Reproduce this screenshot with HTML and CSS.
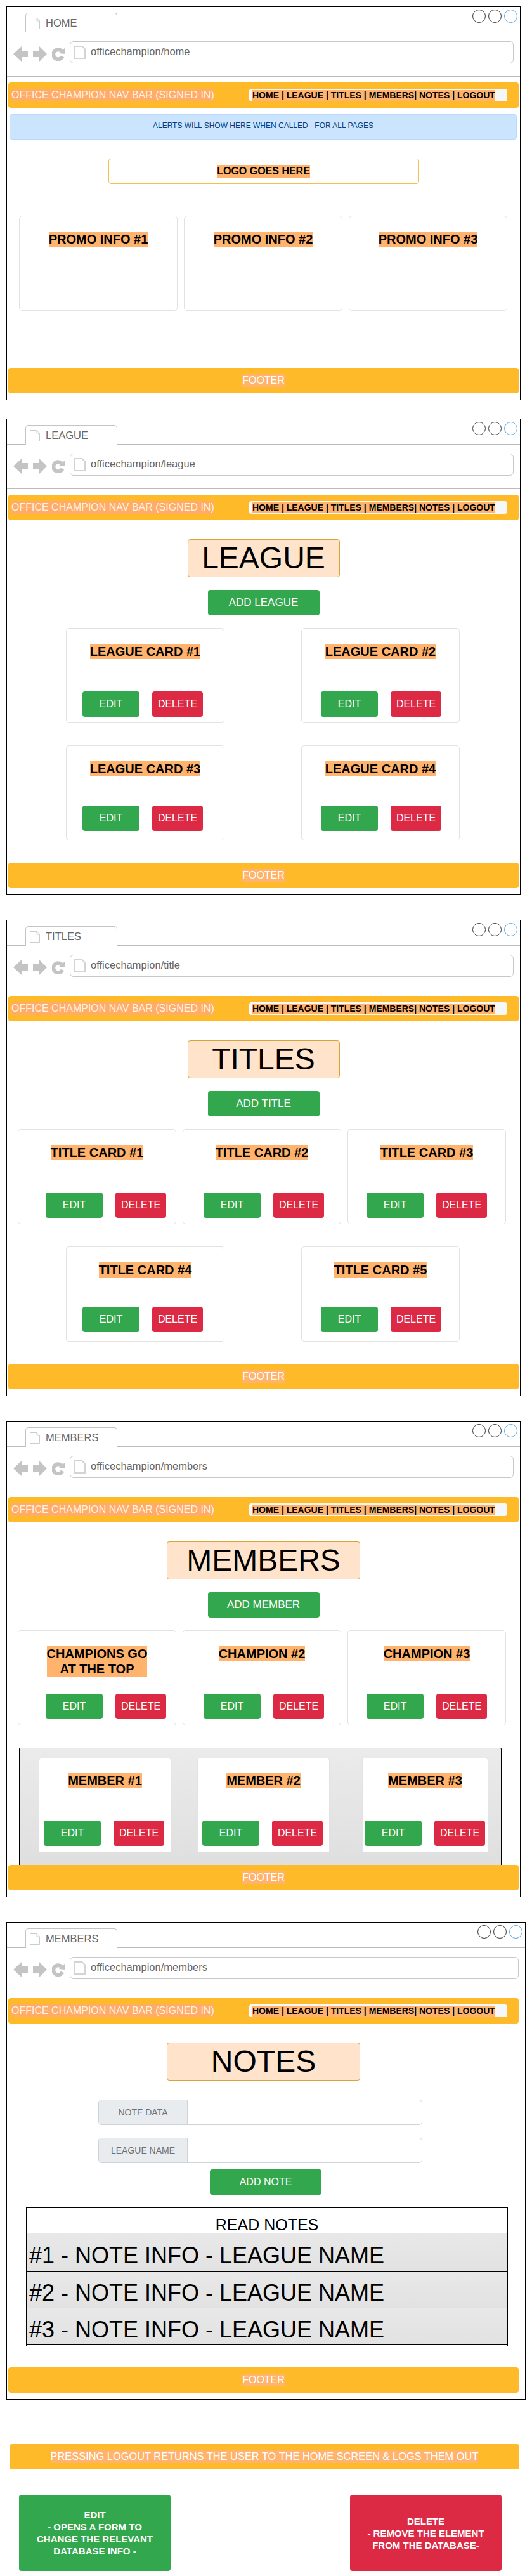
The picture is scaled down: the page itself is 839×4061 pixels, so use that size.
FILE: index.html
```html
<!DOCTYPE html>
<html lang="en">
<head>
<meta charset="utf-8">
<title>Office Champion wireframes</title>
<link rel="stylesheet" href="styles.css">
</head>
<body>
<svg class="sprite" xmlns="http://www.w3.org/2000/svg">
  <symbol id="i-tabfile" viewBox="0 0 16 18"><path d="M.5.5H11L15.5 5V17.5H.5Z M11 .5V5H15.5" fill="#fff" stroke="#ccc"/></symbol>
  <symbol id="i-urlfile" viewBox="0 0 18 21"><path d="M1 1H12.5L17 5.5V20H1Z" fill="#fff" stroke="#d4d4d4" stroke-width="2"/></symbol>
  <symbol id="i-back" viewBox="0 0 23 24"><path d="M0 12 13 0V7H23V17H13V24Z" fill="#c4c4c4"/></symbol>
  <symbol id="i-fwd" viewBox="0 0 22 24"><path d="M22 12 10 0V7H0V17H10V24Z" fill="#c4c4c4"/></symbol>
  <symbol id="i-reload" viewBox="0 0 21 22"><path d="M15 6.500A7.500 7.500 0 1 0 16.500 15" fill="none" stroke="#c4c4c4" stroke-width="6"/><path d="M11 10 21 1V11Z" fill="#c4c4c4"/></symbol>
</svg>

<section class="frame">
  <div class="strip"><div class="tab"><svg class="tab-icon"><use href="#i-tabfile"/></svg><span>HOME</span></div><div class="controls"><i class="dot"></i><i class="dot"></i><i class="dot dot-blue"></i></div></div>
  <div class="toolbar"><svg class="ico-back"><use href="#i-back"/></svg><svg class="ico-fwd"><use href="#i-fwd"/></svg><svg class="ico-reload"><use href="#i-reload"/></svg><div class="address"><svg class="url-icon"><use href="#i-urlfile"/></svg><span>officechampion/home</span></div></div>
  <div class="content">
    <nav class="nav"><span class="mark nav-title">OFFICE CHAMPION NAV BAR (SIGNED IN)</span><div class="nav-links"><span class="mark">HOME | LEAGUE | TITLES | MEMBERS| NOTES | LOGOUT</span></div></nav>
    <div class="alert">ALERTS WILL SHOW HERE WHEN CALLED - FOR ALL PAGES</div>
    <div class="logo"><span class="mark">LOGO GOES HERE</span></div>
    <div class="row row-three promo-row">
      <div class="card"><span class="mark card-title">PROMO INFO #1</span></div>
      <div class="card"><span class="mark card-title">PROMO INFO #2</span></div>
      <div class="card"><span class="mark card-title">PROMO INFO #3</span></div>
    </div>
    <footer class="footer footer-home"><span class="mark">FOOTER</span></footer>
  </div>
</section>

<section class="frame">
  <div class="strip"><div class="tab"><svg class="tab-icon"><use href="#i-tabfile"/></svg><span>LEAGUE</span></div><div class="controls"><i class="dot"></i><i class="dot"></i><i class="dot dot-blue"></i></div></div>
  <div class="toolbar"><svg class="ico-back"><use href="#i-back"/></svg><svg class="ico-fwd"><use href="#i-fwd"/></svg><svg class="ico-reload"><use href="#i-reload"/></svg><div class="address"><svg class="url-icon"><use href="#i-urlfile"/></svg><span>officechampion/league</span></div></div>
  <div class="content">
    <nav class="nav"><span class="mark nav-title">OFFICE CHAMPION NAV BAR (SIGNED IN)</span><div class="nav-links"><span class="mark">HOME | LEAGUE | TITLES | MEMBERS| NOTES | LOGOUT</span></div></nav>
    <h1 class="heading">LEAGUE</h1>
    <button class="btn btn-add">ADD LEAGUE</button>
    <div class="row row-two row-first">
      <div class="card"><span class="mark card-title">LEAGUE CARD #1</span><div class="actions inset-25"><button class="btn btn-edit">EDIT</button><button class="btn btn-delete">DELETE</button></div></div>
      <div class="card"><span class="mark card-title">LEAGUE CARD #2</span><div class="actions inset-30"><button class="btn btn-edit">EDIT</button><button class="btn btn-delete">DELETE</button></div></div>
    </div>
    <div class="row row-two row-next">
      <div class="card card-low"><span class="mark card-title">LEAGUE CARD #3</span><div class="actions inset-25"><button class="btn btn-edit">EDIT</button><button class="btn btn-delete">DELETE</button></div></div>
      <div class="card card-low"><span class="mark card-title">LEAGUE CARD #4</span><div class="actions inset-30"><button class="btn btn-edit">EDIT</button><button class="btn btn-delete">DELETE</button></div></div>
    </div>
    <footer class="footer footer-gap"><span class="mark">FOOTER</span></footer>
  </div>
</section>

<section class="frame">
  <div class="strip"><div class="tab"><svg class="tab-icon"><use href="#i-tabfile"/></svg><span>TITLES</span></div><div class="controls"><i class="dot"></i><i class="dot"></i><i class="dot dot-blue"></i></div></div>
  <div class="toolbar"><svg class="ico-back"><use href="#i-back"/></svg><svg class="ico-fwd"><use href="#i-fwd"/></svg><svg class="ico-reload"><use href="#i-reload"/></svg><div class="address"><svg class="url-icon"><use href="#i-urlfile"/></svg><span>officechampion/title</span></div></div>
  <div class="content">
    <nav class="nav"><span class="mark nav-title">OFFICE CHAMPION NAV BAR (SIGNED IN)</span><div class="nav-links"><span class="mark">HOME | LEAGUE | TITLES | MEMBERS| NOTES | LOGOUT</span></div></nav>
    <h1 class="heading">TITLES</h1>
    <button class="btn btn-add">ADD TITLE</button>
    <div class="row row-three row-first">
      <div class="card"><span class="mark card-title">TITLE CARD #1</span><div class="actions inset-43"><button class="btn btn-edit">EDIT</button><button class="btn btn-delete">DELETE</button></div></div>
      <div class="card"><span class="mark card-title">TITLE CARD #2</span><div class="actions inset-32"><button class="btn btn-edit">EDIT</button><button class="btn btn-delete">DELETE</button></div></div>
      <div class="card"><span class="mark card-title">TITLE CARD #3</span><div class="actions inset-29"><button class="btn btn-edit">EDIT</button><button class="btn btn-delete">DELETE</button></div></div>
    </div>
    <div class="row row-two row-next">
      <div class="card card-low"><span class="mark card-title">TITLE CARD #4</span><div class="actions inset-25"><button class="btn btn-edit">EDIT</button><button class="btn btn-delete">DELETE</button></div></div>
      <div class="card card-low"><span class="mark card-title">TITLE CARD #5</span><div class="actions inset-30"><button class="btn btn-edit">EDIT</button><button class="btn btn-delete">DELETE</button></div></div>
    </div>
    <footer class="footer footer-gap"><span class="mark">FOOTER</span></footer>
  </div>
</section>

<section class="frame">
  <div class="strip"><div class="tab"><svg class="tab-icon"><use href="#i-tabfile"/></svg><span>MEMBERS</span></div><div class="controls"><i class="dot"></i><i class="dot"></i><i class="dot dot-blue"></i></div></div>
  <div class="toolbar"><svg class="ico-back"><use href="#i-back"/></svg><svg class="ico-fwd"><use href="#i-fwd"/></svg><svg class="ico-reload"><use href="#i-reload"/></svg><div class="address"><svg class="url-icon"><use href="#i-urlfile"/></svg><span>officechampion/members</span></div></div>
  <div class="content">
    <nav class="nav"><span class="mark nav-title">OFFICE CHAMPION NAV BAR (SIGNED IN)</span><div class="nav-links"><span class="mark">HOME | LEAGUE | TITLES | MEMBERS| NOTES | LOGOUT</span></div></nav>
    <h1 class="heading heading-wide">MEMBERS</h1>
    <button class="btn btn-add">ADD MEMBER</button>
    <div class="row row-three row-first">
      <div class="card"><span class="mark card-title">CHAMPIONS GO<br>AT THE TOP</span><div class="actions inset-43"><button class="btn btn-edit">EDIT</button><button class="btn btn-delete">DELETE</button></div></div>
      <div class="card"><span class="mark card-title">CHAMPION #2</span><div class="actions inset-32"><button class="btn btn-edit">EDIT</button><button class="btn btn-delete">DELETE</button></div></div>
      <div class="card"><span class="mark card-title">CHAMPION #3</span><div class="actions inset-29"><button class="btn btn-edit">EDIT</button><button class="btn btn-delete">DELETE</button></div></div>
    </div>
    <div class="panel">
      <div class="card card-member"><span class="mark card-title">MEMBER #1</span><div class="actions inset-7"><button class="btn btn-edit">EDIT</button><button class="btn btn-delete">DELETE</button></div></div>
      <div class="card card-member"><span class="mark card-title">MEMBER #2</span><div class="actions inset-7"><button class="btn btn-edit">EDIT</button><button class="btn btn-delete">DELETE</button></div></div>
      <div class="card card-member card-member-last"><span class="mark card-title">MEMBER #3</span><div class="actions inset-3"><button class="btn btn-edit">EDIT</button><button class="btn btn-delete">DELETE</button></div></div>
    </div>
    <footer class="footer"><span class="mark">FOOTER</span></footer>
  </div>
</section>

<section class="frame frame-wide">
  <div class="strip"><div class="tab"><svg class="tab-icon"><use href="#i-tabfile"/></svg><span>MEMBERS</span></div><div class="controls"><i class="dot"></i><i class="dot"></i><i class="dot dot-blue"></i></div></div>
  <div class="toolbar"><svg class="ico-back"><use href="#i-back"/></svg><svg class="ico-fwd"><use href="#i-fwd"/></svg><svg class="ico-reload"><use href="#i-reload"/></svg><div class="address"><svg class="url-icon"><use href="#i-urlfile"/></svg><span>officechampion/members</span></div></div>
  <div class="content">
    <nav class="nav"><span class="mark nav-title">OFFICE CHAMPION NAV BAR (SIGNED IN)</span><div class="nav-links"><span class="mark">HOME | LEAGUE | TITLES | MEMBERS| NOTES | LOGOUT</span></div></nav>
    <h1 class="heading heading-wide">NOTES</h1>
    <div class="field field-first"><label class="field-label">NOTE DATA</label><div class="field-input"></div></div>
    <div class="field"><label class="field-label">LEAGUE NAME</label><div class="field-input"></div></div>
    <button class="btn btn-add-note">ADD NOTE</button>
    <div class="notes">
      <div class="notes-head">READ NOTES</div>
      <div class="note">#1 - NOTE INFO - LEAGUE NAME</div>
      <div class="note">#2 - NOTE INFO - LEAGUE NAME</div>
      <div class="note">#3 - NOTE INFO - LEAGUE NAME</div>
    </div>
    <footer class="footer footer-notes"><span class="mark">FOOTER</span></footer>
  </div>
</section>

<div class="logout-note"><span class="mark">PRESSING LOGOUT RETURNS THE USER TO THE HOME SCREEN &amp; LOGS THEM OUT</span></div>
<div class="legend">
  <div class="legend-box legend-edit">EDIT<br>- OPENS A FORM TO<br>CHANGE THE RELEVANT<br>DATABASE INFO -</div>
  <div class="legend-box legend-delete">DELETE<br>- REMOVE THE ELEMENT<br>FROM THE DATABASE-</div>
</div>
</body>
</html>
```
FILE: styles.css
```css
* { box-sizing: border-box; }
html, body { margin: 0; padding: 0; }
body {
  background: #fff;
  color: #000;
  font-family: "Liberation Sans", Arial, sans-serif;
  padding: 10px 0 8px 10px;
  width: 839px;
}
.sprite { display: none; }

/* browser frame */
.frame {
  width: 811px;
  border: 1px solid #000;
  padding-bottom: 10px;
  margin-bottom: 39px;
}
.frame:first-of-type { margin-bottom: 29px; }
.frame-wide { width: 819px; margin-bottom: 70px; }
.strip {
  display: flex;
  height: 40px;
  border-bottom: 1px solid #bbb;
}
.tab {
  display: flex;
  align-items: flex-start;
  width: 145px;
  height: 31px;
  margin: 9px 0 0 29px;
  padding: 6px 0 0 6px;
  background: #fff;
  border: 1px solid #c4c4c4;
  border-bottom: 0;
  border-radius: 5px 5px 0 0;
  color: #666;
  font-size: 16.5px;
  line-height: 19px;
}
.tab span { margin-left: 9px; }
.tab-icon { width: 16px; height: 18px; flex: none; margin-top: 1px; }
.controls { display: flex; gap: 4px; margin: 4px 4px 0 auto; }
.dot {
  display: block;
  width: 21px;
  height: 21px;
  border: 1px solid #333;
  border-radius: 50%;
}
.dot-blue { border-color: #4fa3e8; }
.toolbar {
  display: flex;
  align-items: flex-start;
  height: 70px;
  padding: 14px 10px 0 10px;
  border-bottom: 1px solid #bbb;
}
.ico-back { width: 23px; height: 24px; margin-top: 8px; flex: none; }
.ico-fwd { width: 22px; height: 24px; margin: 8px 0 0 8px; flex: none; }
.ico-reload { width: 21px; height: 22px; margin: 9px 0 0 8px; flex: none; }
.address {
  flex: 1;
  display: flex;
  align-items: center;
  height: 35px;
  margin-left: 7px;
  padding-left: 6px;
  border: 1px solid #c8c8c8;
  border-radius: 6px;
  color: #666;
  font-size: 16.5px;
}
.address span { margin-left: 8px; margin-top: -3px; }
.url-icon { width: 18px; height: 21px; flex: none; }

/* page content */
.content { width: 805px; margin: 9px 0 0 2px; }
.mark {
  background: #ffb36c;
  display: inline-block;
  line-height: 1.2;
}
.nav {
  display: flex;
  align-items: center;
  height: 40px;
  padding: 0 18px 0 5px;
  background: #ffba2a;
  border-radius: 4px;
}
.nav-title { color: #fff3e3; font-size: 16px; background: #ffac68; }
.nav-links {
  display: flex;
  align-items: center;
  width: 407px;
  height: 20px;
  margin-left: auto;
  padding-left: 5px;
  background: #f6f7f8;
  border-radius: 4px;
  border-left: 1px solid #fff;
  font-size: 14px;
  font-weight: bold;
}
.nav-links .mark { margin-left: -1px; line-height: 17px; }
.alert {
  display: flex;
  align-items: center;
  justify-content: center;
  width: 800px;
  height: 40px;
  margin: 10px 0 0 2px;
  padding-bottom: 4px;
  background: #cce5ff;
  border: 1px solid #b8daff;
  border-radius: 4px;
  color: #004085;
  font-size: 12px;
}
.logo {
  display: flex;
  align-items: center;
  justify-content: center;
  width: 490px;
  height: 40px;
  margin: 30px auto 0;
  border: 1px solid #f3c14d;
  border-radius: 4px;
  font-size: 16px;
  font-weight: bold;
}
.row { display: flex; }
.row-three { gap: 10px; padding-left: 15px; }
.row-two { gap: 121px; padding-left: 91px; }
.promo-row { margin-top: 50px; padding-left: 17px; }
.row-first { margin-top: 20px; }
.row-next { margin-top: 35px; }
.card {
  display: flex;
  flex-direction: column;
  align-items: center;
  width: 250px;
  height: 150px;
  padding: 24px 0 9px;
  background: #fff;
  border: 1px solid #e2e2e2;
  border-radius: 5px;
}
.card-low { padding-bottom: 14px; }
.card-title {
  font-size: 20px;
  font-weight: bold;
  text-align: center;
}
.actions {
  display: flex;
  gap: 20px;
  align-self: stretch;
  margin-top: auto;
}
.inset-3 { padding-left: 3px; }
.inset-7 { padding-left: 7px; }
.inset-25 { padding-left: 25px; }
.inset-29 { padding-left: 29px; }
.inset-30 { padding-left: 30px; }
.inset-32 { padding-left: 32px; }
.inset-43 { padding-left: 43px; }
.btn {
  display: block;
  height: 40px;
  padding: 0;
  border: 0;
  border-radius: 4px;
  color: #fff;
  font-family: inherit;
  font-size: 16px;
}
.btn-edit { width: 90px; background: #33a74d; }
.btn-delete { width: 80px; background: #dc2a45; }
.btn-add {
  width: 176px;
  margin: 20px auto 0;
  background: #33a74d;
  font-size: 17px;
}
.btn-add-note {
  width: 176px;
  margin: 10px 0 0 318px;
  background: #33a74d;
  font-size: 16px;
}
.heading {
  width: 240px;
  height: 60px;
  margin: 30px auto 0;
  background: #ffe4cb;
  border: 1px solid #d9a437;
  border-radius: 4px;
  font-size: 48px;
  font-weight: normal;
  line-height: 58px;
  text-align: center;
}
.heading-wide { width: 305px; }
.footer {
  display: flex;
  align-items: center;
  justify-content: center;
  height: 40px;
  background: #ffba2a;
  border-radius: 4px;
  color: #fff;
  font-size: 16px;
}
.footer-home { margin-top: 90px; }
.footer-gap { margin-top: 35px; }
.footer-notes { margin-top: 33px; }

/* members panel */
.panel {
  display: flex;
  width: 761px;
  height: 185px;
  margin: 35px 0 0 17px;
  padding: 15px 0 0 30px;
  background: linear-gradient(#ebebeb, #dfdfdf);
  border: 1px solid #000;
  border-bottom: 0;
  border-radius: 2px 2px 0 0;
}
.card-member {
  width: 209px;
  height: 149px;
  padding-top: 23px;
  padding-bottom: 10px;
  border-bottom: 0;
  border-radius: 4px 4px 0 0;
}
.card-member + .card-member { margin-left: 41px; }
.card-member + .card-member-last { width: 199px; margin-left: 51px; }

/* notes form */
.field {
  display: flex;
  width: 511px;
  height: 40px;
  margin: 20px 0 0 142px;
  border: 1px solid #ced4da;
  border-radius: 5px;
}
.field-first { margin-top: 30px; }
.field-label {
  display: flex;
  align-items: center;
  justify-content: center;
  width: 140px;
  background: #e9ecef;
  border-right: 1px solid #ced4da;
  border-radius: 4px 0 0 4px;
  color: #6a7077;
  font-size: 14px;
}
.field-input { flex: 1; }
.notes {
  width: 760px;
  height: 219px;
  margin: 20px 0 0 28px;
  padding-bottom: 1px;
  border: 1px solid #000;
}
.notes-head {
  display: flex;
  align-items: flex-end;
  justify-content: center;
  height: 40px;
  border-bottom: 1px solid #000;
  font-size: 25px;
  line-height: 25px;
}
.note {
  display: flex;
  align-items: flex-end;
  height: 58px;
  padding: 0 0 5px 4px;
  background: linear-gradient(#e8e8e8, #e2e2e2);
  border-bottom: 1px solid #000;
  font-size: 36px;
  line-height: 36px;
}
.notes-head + .note { height: 60px; padding-bottom: 6px; }

/* notes below the frames */
.logout-note {
  display: flex;
  align-items: center;
  justify-content: center;
  width: 804px;
  height: 40px;
  margin-left: 5px;
  background: #ffba2a;
  border-radius: 4px;
  color: #fff;
  font-size: 16.4px;
}
.legend {
  display: flex;
  justify-content: space-between;
  width: 761px;
  margin: 40px 0 0 20px;
}
.legend-box {
  display: flex;
  align-items: center;
  justify-content: center;
  width: 239px;
  height: 120px;
  border-radius: 4px;
  color: #fff;
  font-size: 15px;
  font-weight: bold;
  line-height: 19px;
  text-align: center;
}
.legend-edit { background: #33a74d; }
.legend-delete { background: #dc2a45; }
```
